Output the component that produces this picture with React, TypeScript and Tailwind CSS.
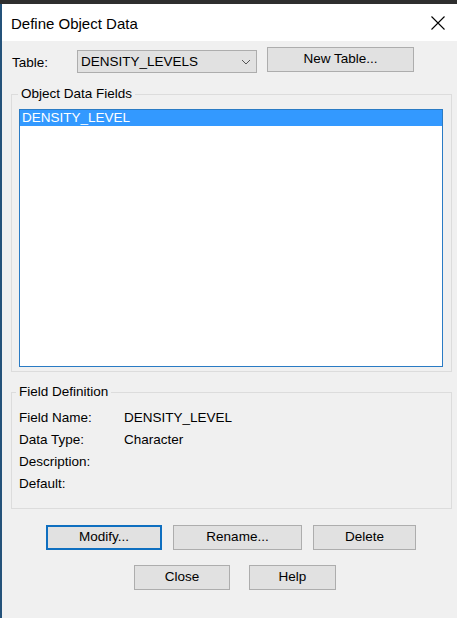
import React from "react";

const font = { fontFamily: '"Liberation Sans", Arial, sans-serif' };

function Btn({ label, w, focused }: { label: string; w: string; focused?: boolean }) {
  return (
    <div
      className={`${w} h-[25px] flex items-center justify-center bg-[#e1e1e1] text-[13.5px] text-black ${
        focused ? "border-2 border-[#0f6fc0]" : "border border-[#adadad]"
      }`}
    >
      {label}
    </div>
  );
}

export default function App() {
  return (
    <div className="w-[457px] h-[618px] bg-[#f0f0f0] flex flex-col overflow-hidden text-black" style={font}>
      <div className="h-[4px] bg-[#2e2e2e] shrink-0" />
      <div className="flex flex-1">
        <div className="w-[2px] bg-[#24527a] shrink-0" />
        <div className="flex-1 flex flex-col">
          {/* title bar */}
          <div className="h-[37px] bg-white flex items-center justify-between pl-[9px] pr-[12px]">
            <span className="text-[15px] leading-none mt-[1px]">Define Object Data</span>
            <svg width="14" height="14" viewBox="0 0 14 14" className="mt-[1px]">
              <path d="M0.5 0.5 L13.5 13.5 M13.5 0.5 L0.5 13.5" stroke="#000" strokeWidth="1.1" fill="none" />
            </svg>
          </div>

          {/* table row */}
          <div className="flex items-start mt-[6px] h-[27px]">
            <span className="text-[13.5px] ml-[10px] mt-[6px] w-[65px]">Table:</span>
            <div className="mt-[3px] w-[180px] h-[23px] bg-[#e1e1e1] border border-[#adadad] flex items-center justify-between pl-[3px] pr-[5px]">
              <span className="text-[13.5px] mt-[1px]">DENSITY_LEVELS</span>
              <svg width="10" height="6" viewBox="0 0 10 6">
                <path d="M1 1 L5 5 L9 1" stroke="#555" strokeWidth="1" fill="none" />
              </svg>
            </div>
            <div className="ml-[10px]">
              <Btn label="New Table..." w="w-[147px]" />
            </div>
          </div>

          {/* Object Data Fields group */}
          <div className="relative ml-[9px] mr-[5px] mt-[20px] h-[278px] border border-[#dcdcdc] pt-[14px] pl-[7px] pr-[8px] pb-[4px]">
            <span className="absolute left-[6px] -top-[9px] px-[3px] bg-[#f0f0f0] text-[13.5px] leading-[16px]">
              Object Data Fields
            </span>
            <div className="w-full h-full bg-white border border-[#2a7bc4]">
              <div className="h-[16px] bg-[#3399ff] text-white text-[13.5px] leading-[16px] pl-[2px]">DENSITY_LEVEL</div>
            </div>
          </div>

          {/* Field Definition group */}
          <div className="relative ml-[9px] mr-[5px] mt-[20px] h-[117px] border border-[#dcdcdc] pt-[14px] pl-[7px]">
            <span className="absolute left-[4px] -top-[9px] px-[3px] bg-[#f0f0f0] text-[13.5px] leading-[16px]">
              Field Definition
            </span>
            <div className="flex flex-col text-[13.5px] leading-[22px]">
              <div className="flex">
                <span className="w-[105px]">Field Name:</span>
                <span>DENSITY_LEVEL</span>
              </div>
              <div className="flex">
                <span className="w-[105px]">Data Type:</span>
                <span>Character</span>
              </div>
              <div className="flex">
                <span className="w-[105px]">Description:</span>
              </div>
              <div className="flex">
                <span className="w-[105px]">Default:</span>
              </div>
            </div>
          </div>

          {/* buttons */}
          <div className="flex ml-[44px] mt-[16px] gap-[11px]">
            <Btn label="Modify..." w="w-[116px]" focused />
            <Btn label="Rename..." w="w-[129px]" />
            <Btn label="Delete" w="w-[103px]" />
          </div>
          <div className="flex ml-[132px] mt-[15px] gap-[19px]">
            <Btn label="Close" w="w-[96px]" />
            <Btn label="Help" w="w-[87px]" />
          </div>
        </div>
      </div>
    </div>
  );
}
